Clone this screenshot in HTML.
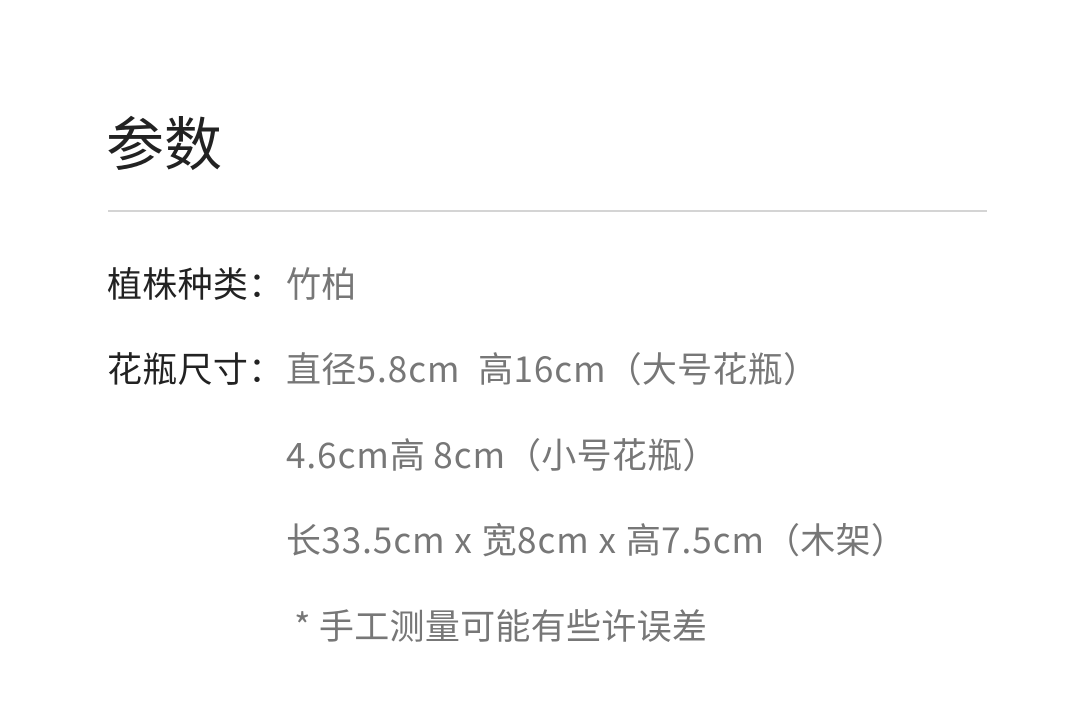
<!DOCTYPE html>
<html><head><meta charset="utf-8"><style>
html,body{margin:0;padding:0;background:#fff;width:1080px;height:727px;overflow:hidden}
body{font-family:"Noto Sans CJK SC",sans-serif;position:relative}
.t{position:absolute;left:106px;top:102px;font-size:58px;color:#222;line-height:76px}
.hr{position:absolute;left:108px;top:210px;width:879px;height:2px;background:#d4d4d4}
.r{position:absolute;font-size:35px;line-height:44px;white-space:nowrap;letter-spacing:0.3px}
.l{left:107px;color:#222}
.v{left:286px;color:#777}
.n{letter-spacing:1px}
</style></head><body>
<div class="t">参数</div>
<div class="hr"></div>
<div class="r l" style="top:261px">植株种类：</div>
<div class="r v" style="top:261px">竹柏</div>
<div class="r l" style="top:346px">花瓶尺寸：</div>
<div class="r v" style="top:346px">直径<span class="n">5.8cm&nbsp; </span>高<span class="n">16cm</span>（大号花瓶）</div>
<div class="r v" style="top:432px"><span class="n">4.6cm</span>高 <span class="n">8cm</span>（小号花瓶）</div>
<div class="r v" style="top:517px">长<span class="n">33.5cm x </span>宽<span class="n">8cm x </span>高<span class="n">7.5cm</span>（木架）</div>
<div class="r v" style="top:603px">&nbsp;* 手工测量可能有些许误差</div>
</body></html>
